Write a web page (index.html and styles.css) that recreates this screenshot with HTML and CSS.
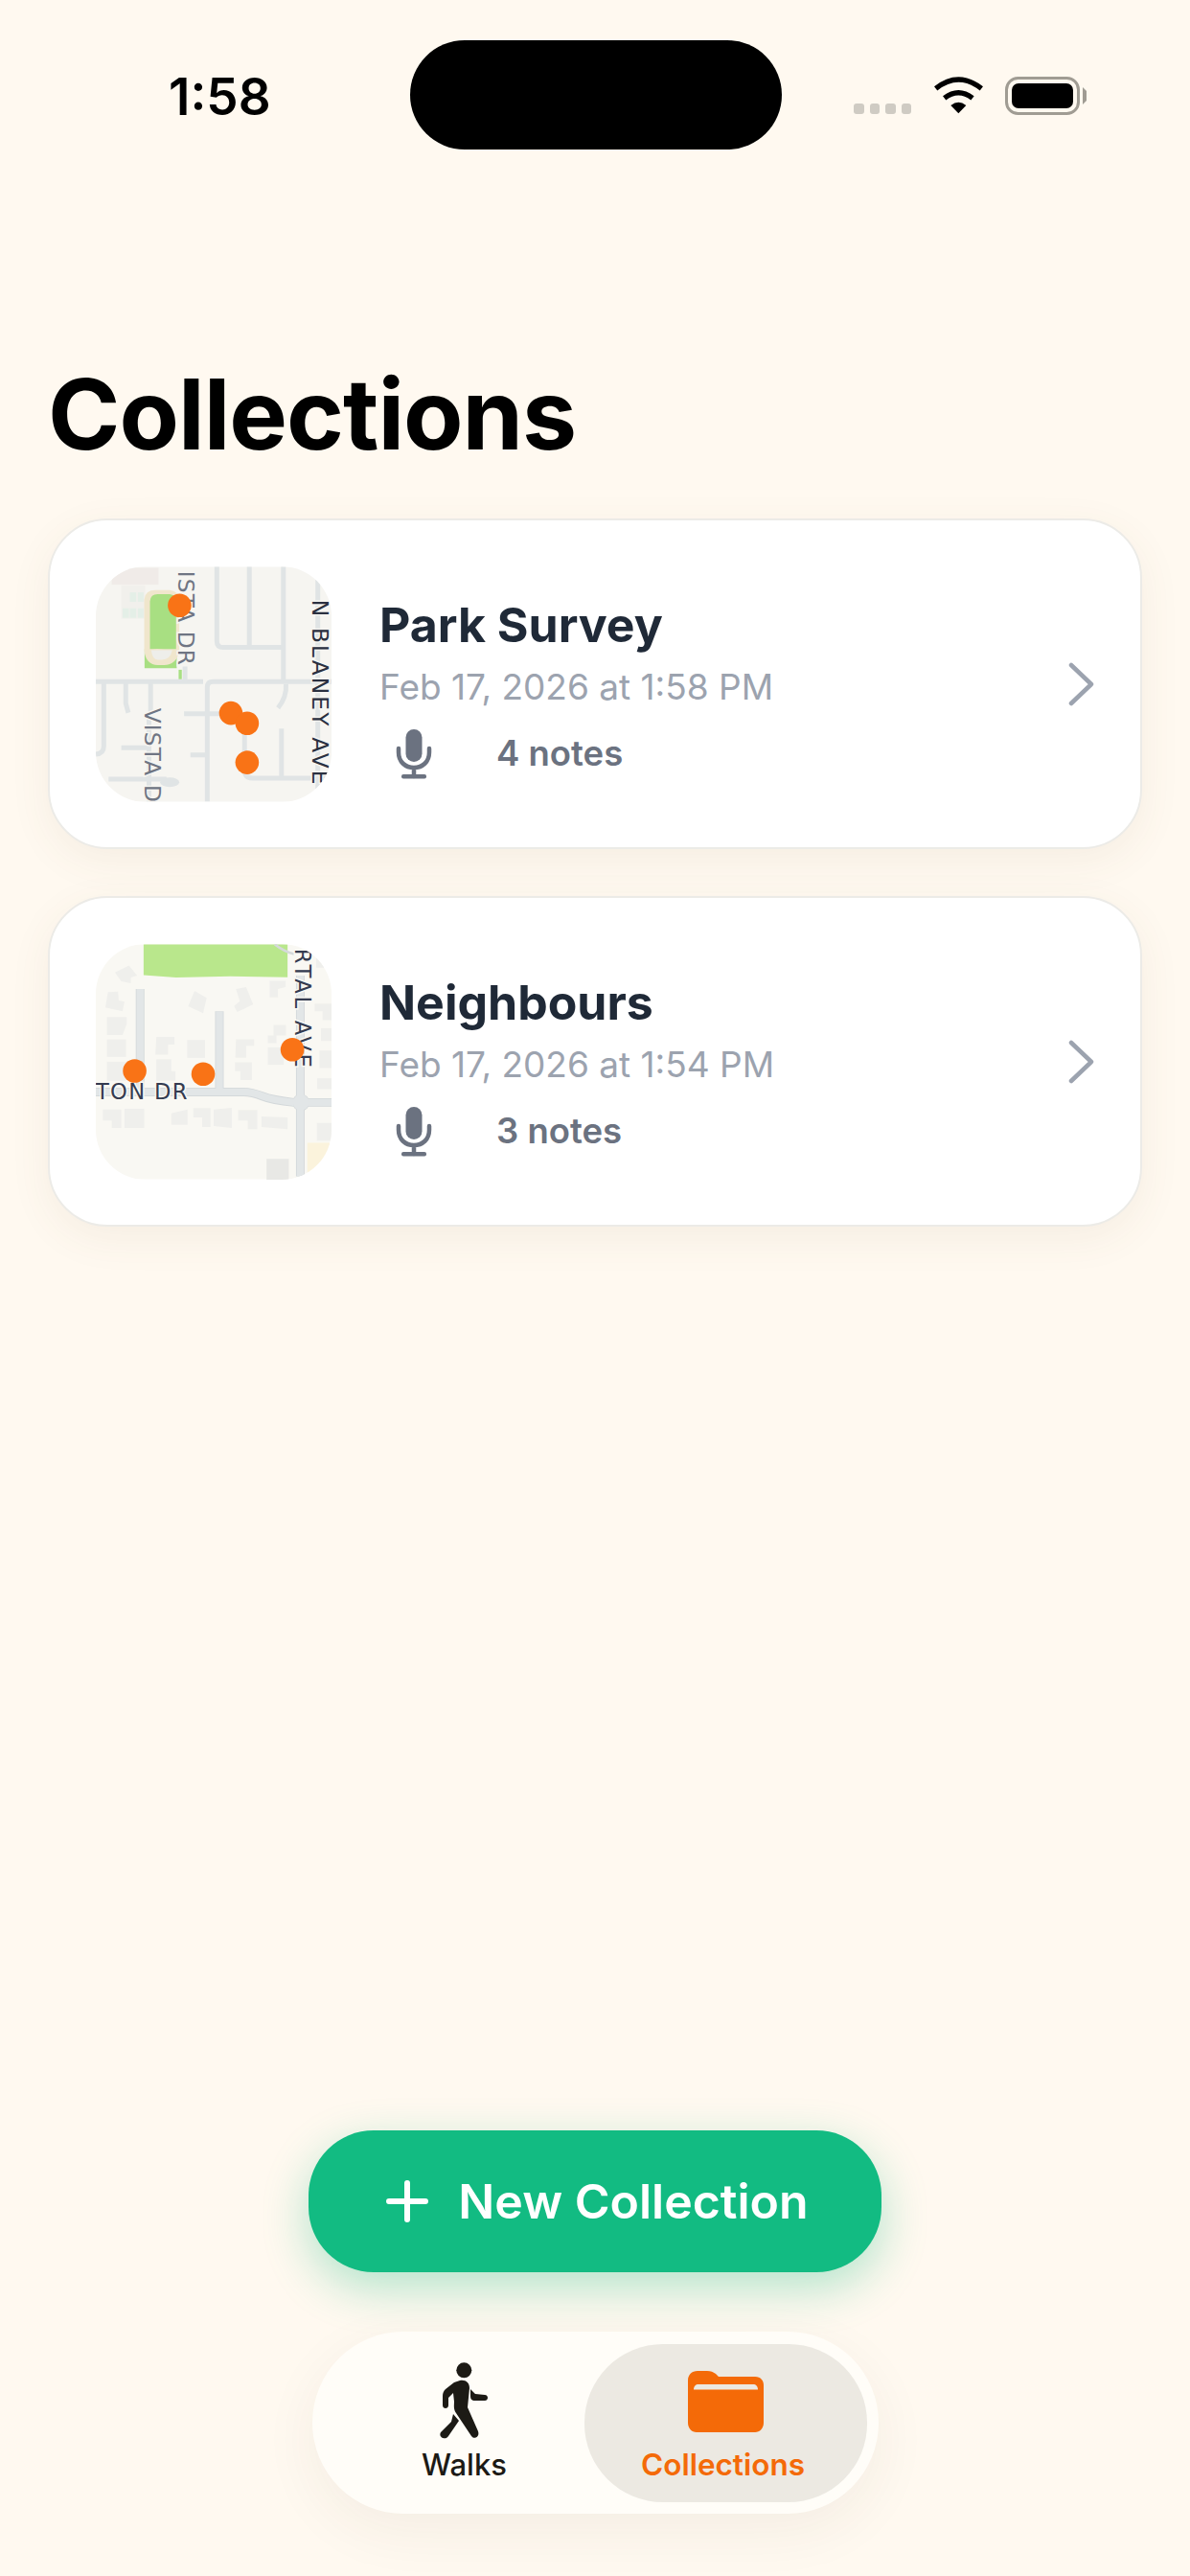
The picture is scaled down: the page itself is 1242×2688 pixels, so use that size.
FILE: index.html
```html
<!DOCTYPE html>
<html lang="en">
<head>
<meta charset="utf-8">
<title>Collections</title>
<link rel="stylesheet" href="styles.css">
</head>
<body>
<main class="screen">
  <header class="status">
    <div class="status-left"><span class="time">1:58</span></div>
    <div class="island"></div>
    <div class="status-right">
      <div class="signal"><i></i><i></i><i></i><i></i></div>
      <svg class="wifi" viewBox="280 33 160 117"><path class="wifi-arc" d="M287 70 Q358 14 430 70"/><path class="wifi-arc" d="M314 100 Q358 66 402 100"/><path class="wifi-wedge" d="M358 148 L334 123 Q358 104 382 123 Z"/></svg>
      <svg class="battery" viewBox="0 0 86 40"><rect class="batt-shell" x="1.5" y="1.5" width="75" height="37" rx="12"/><rect class="batt-fill" x="7" y="7" width="64" height="26" rx="7"/><path class="batt-nub" d="M81 11 L85 15 V25 L81 29 Z"/></svg>
    </div>
  </header>

  <h1 class="title">Collections</h1>

  <section class="list">
    <article class="card">
      <div class="thumb">
        <svg class="map" viewBox="178 182 740 737">
          <rect class="m-bg" x="178" y="182" width="740" height="737"/>
          <rect class="m-pink" x="228" y="185" width="147" height="53"/>
          <rect class="m-block" x="258" y="240" width="75" height="105"/>
          <g class="m-mint">
            <rect x="285" y="262" width="20" height="30"/>
            <rect x="310" y="262" width="18" height="30"/>
            <rect x="262" y="312" width="20" height="30"/>
            <rect x="285" y="312" width="20" height="30"/>
            <rect x="310" y="312" width="18" height="30"/>
          </g>
          <path class="m-park" d="M331 500 V440 H432 V500 Z"/>
          <path class="m-tan" d="M330 445 V285 Q332 255 366 255 H410 Q438 258 440 285 V445 Q432 490 392 490 H372 Q336 490 330 445 Z"/>
          <path class="m-park" d="M348 440 V290 Q350 268 372 268 H410 Q428 270 430 290 V440 H395 Q370 438 348 440 Z"/>
          <path class="m-pale" d="M352 444 H418 Q412 474 385 474 H372 Q356 474 352 444 Z"/>
          <rect class="m-park" x="438" y="505" width="10" height="30"/>
          <path class="m-road" d="M558 182 V415 Q558 435 578 435 H768"/>
          <path class="m-road" d="M660 182 V435"/>
          <path class="m-road" d="M767 182 V542"/>
          <path class="m-road" d="M178 542 H515"/>
          <path class="m-road" d="M528 918 V560 Q528 542 546 542 H918"/>
          <path class="m-road" d="M458 495 V542"/>
          <path class="m-road" d="M203 542 V745 Q203 768 178 770"/>
          <path class="m-road" d="M272 542 V610 L280 640"/>
          <path class="m-road" d="M350 542 V640"/>
          <path class="m-road" d="M775 550 Q778 590 750 625"/>
          <path class="m-road" d="M455 643 H600"/>
          <path class="m-road" d="M645 660 V820 Q645 845 670 845 H918"/>
          <path class="m-road" d="M761 690 V845"/>
          <path class="m-road" d="M258 750 H345"/>
          <path class="m-road" d="M475 772 H528"/>
          <path class="m-road" d="M218 848 H400"/>
          <ellipse class="m-roadfill" cx="410" cy="858" rx="30" ry="15"/>
          <path class="m-road" d="M875 215 V918"/>
          <path class="m-road" d="M345 640 V918"/>
          <text class="m-label m-grey" x="437" y="195" transform="rotate(90 437 195)" textLength="295">ISTA DR</text>
          <text class="m-label m-grey" x="331" y="625" transform="rotate(90 331 625)" textLength="295">VISTA D</text>
          <text class="m-label m-dark" x="857" y="285" transform="rotate(90 857 285)" textLength="580">N BLANEY AVE</text>
          <circle class="m-dot" cx="441" cy="303" r="37"/>
          <circle class="m-dot" cx="602" cy="641" r="37"/>
          <circle class="m-dot" cx="653" cy="673" r="37"/>
          <circle class="m-dot" cx="653" cy="796" r="37"/>
        </svg>
      </div>
      <div class="info">
        <h2 class="name">Park Survey</h2>
        <p class="date">Feb 17, 2026 at 1:58 PM</p>
        <div class="count">
          <svg class="mic" viewBox="10 5 44 58"><rect class="mic-head" x="23.5" y="9" width="17" height="34" rx="8.5"/><path class="mic-arm" d="M16 29 V33 C16 43 23 49 32 49 C41 49 48 43 48 33 V29 M32 49 V58"/><rect class="mic-head" x="19" y="56" width="26" height="4.5" rx="2"/></svg>
          <span>4 notes</span>
        </div>
      </div>
      <svg class="chev" viewBox="0 0 28 46"><path d="M3 3 L24 23 L3 43"/></svg>
    </article>

    <article class="card">
      <div class="thumb">
        <svg class="map" viewBox="178 192 740 737">
          <rect class="m-bg2" x="178" y="192" width="740" height="737"/>
          <path class="m-park2" d="M328 192 H780 V295 L600 292 L430 296 L328 288 Z"/>
          <path class="m-thin" d="M740 192 Q770 215 800 222"/>
          <path class="m-yellow" d="M842 815 H918 V929 H842 Z"/>
          <g class="m-bld">
            <path d="M238 280 L282 258 L308 290 L288 296 L288 314 L258 308 Z"/>
            <path d="M216 342 L248 340 L250 368 L268 372 L262 402 L208 390 Z"/>
            <path d="M213 420 H275 V442 L262 476 H213 Z"/>
            <rect x="213" y="490" width="60" height="55"/>
            <rect x="213" y="560" width="60" height="60"/>
            <path d="M368 482 H425 V506 H405 V538 H365 Z"/>
            <path d="M368 552 H415 V590 H428 V620 H368 Z"/>
            <rect x="465" y="492" width="56" height="56"/>
            <path d="M618 490 H675 V510 H650 V548 H616 Z"/>
            <path d="M615 562 H668 V618 H632 V590 H615 Z"/>
            <path d="M488 338 L526 360 L515 408 L468 386 Z"/>
            <path d="M618 332 L650 326 L672 380 L622 404 L612 385 L630 370 Z"/>
            <path d="M724 306 H774 V326 L750 332 V358 H724 Z"/>
            <path d="M736 445 H775 V478 H745 V502 H718 V478 H736 Z"/>
            <rect x="718" y="515" width="50" height="55"/>
            <path d="M865 378 H918 V430 H890 V402 H865 Z"/>
            <rect x="885" y="455" width="33" height="40"/>
            <rect x="880" y="525" width="38" height="55"/>
            <rect x="873" y="612" width="45" height="34"/>
            <path d="M870 235 H905 V265 H870 Z"/>
            <path d="M200 710 H258 V768 H228 V745 H200 Z"/>
            <rect x="268" y="708" width="62" height="60"/>
            <path d="M415 722 L466 710 V758 H415 Z"/>
            <path d="M484 706 H538 V765 H512 V735 H484 Z"/>
            <path d="M548 710 L605 705 V768 L548 762 Z"/>
            <path d="M625 712 H685 V772 H655 V745 H625 Z"/>
            <path d="M698 732 L780 735 V772 L698 765 Z"/>
            <path d="M872 752 H918 V808 H872 Z"/>
            <rect class="m-bld-dark" x="714" y="865" width="70" height="66"/>
          </g>
          <path class="m-wide-o" d="M317 332 V655"/>
          <path class="m-wide-o" d="M566 402 V650"/>
          <path class="m-wide-o" d="M178 655 H640 Q668 655 700 668 T800 688"/>
          <path class="m-wide-o" d="M820 290 V920"/>
          <path class="m-wide-o" d="M822 688 H918"/>
          <circle class="m-rb-o" cx="822" cy="688" r="27"/>
          <path class="m-wide" d="M317 332 V655"/>
          <path class="m-wide" d="M566 402 V650"/>
          <path class="m-wide" d="M178 655 H640 Q668 655 700 668 T800 688"/>
          <path class="m-wide" d="M820 290 V920"/>
          <path class="m-wide" d="M822 688 H918"/>
          <circle class="m-rb" cx="822" cy="688" r="25"/>
          <text class="m-label2 m-dark2" x="178" y="677" textLength="287">TON DR</text>
          <text class="m-label2 m-dark2" x="805" y="205" transform="rotate(90 805 205)" textLength="373">RTAL AVE</text>
          <circle class="m-dot" cx="300" cy="589" r="37"/>
          <circle class="m-dot" cx="515" cy="599" r="37"/>
          <circle class="m-dot" cx="795" cy="522" r="37"/>
        </svg>
      </div>
      <div class="info">
        <h2 class="name">Neighbours</h2>
        <p class="date">Feb 17, 2026 at 1:54 PM</p>
        <div class="count">
          <svg class="mic" viewBox="10 5 44 58"><rect class="mic-head" x="23.5" y="9" width="17" height="34" rx="8.5"/><path class="mic-arm" d="M16 29 V33 C16 43 23 49 32 49 C41 49 48 43 48 33 V29 M32 49 V58"/><rect class="mic-head" x="19" y="56" width="26" height="4.5" rx="2"/></svg>
          <span>3 notes</span>
        </div>
      </div>
      <svg class="chev" viewBox="0 0 28 46"><path d="M3 3 L24 23 L3 43"/></svg>
    </article>
  </section>

  <div class="spacer"></div>

  <button class="cta">
    <svg class="plus" viewBox="0 0 44 44"><path d="M22 3 V41 M3 22 H41"/></svg>
    <span>New Collection</span>
  </button>

  <nav class="tabs">
    <a class="tab">
      <svg class="tab-icon" viewBox="0 0 110 110"><circle class="walker" cx="54.3" cy="23.3" r="8"/><path class="walker" d="M50 34 C56 33 60 36 60 42 L58 62 L69 87 C71 93 65 96 62 92 L46 68 C43 64 44 60 44 56 L43 47 L38 52 L38 60 C38 64 32 64 32 60 L32 50 C32 47 33 45 35 43 L44 36 Z"/><path class="walker" d="M43 69 L49 76 L38 92 C35 97 27 93 30 88 L41 77 Z"/><path class="walker" d="M61 43 L66 48 L76 49 C80 49 80 55 76 55 L66 55 C62 55 61 53 61 50 Z"/></svg>
      <span>Walks</span>
    </a>
    <a class="tab tab-active">
      <svg class="tab-icon" viewBox="0 0 110 110"><path class="folder" d="M26 14 H36 C40 14 42 15 45 17 L48 20 H86 C92 20 95 24 95 29 V68 C95 74 91 78 86 78 H25 C20 78 16 74 16 68 V24 C16 18 20 14 26 14 Z"/><path class="folder-slot" d="M22 33.5 C22 30 24 28 27 28 H84 C87 28 89 30 89 33.5 Z"/></svg>
      <span>Collections</span>
    </a>
  </nav>
</main>
</body>
</html>
```
FILE: styles.css
```css
* { box-sizing: border-box; }
html, body { margin: 0; padding: 0; }
body { background: #fff9f0; font-family: Inter, "Liberation Sans", sans-serif; }

.screen {
  width: 1242px;
  height: 2688px;
  display: flex;
  flex-direction: column;
  overflow: hidden;
  background: #fff9f0;
}

/* status bar */
.status {
  display: grid;
  grid-template-columns: 428px 388px 426px;
  height: 114px;
  margin-top: 42px;
  align-items: center;
}
.status-left { padding-left: 176px; padding-top: 3px; }
.time { font-size: 53px; font-weight: 600; color: #000; }
.island { height: 114px; border-radius: 57px; background: #000; }
.status-right { display: flex; align-items: flex-start; height: 114px; padding-top: 38px; }
.signal { display: flex; gap: 6px; margin: 28px 0 0 75px; }
.signal i { width: 10.5px; height: 11px; border-radius: 3px; background: #cfcbc3; }
.wifi { width: 54px; height: 39px; margin-left: 23px; }
.wifi-arc { fill: none; stroke: #000; stroke-width: 16; }
.wifi-wedge { fill: #000; }
.battery { width: 86px; height: 40px; margin-left: 21px; }
.batt-shell { fill: none; stroke: #a09c93; stroke-width: 3; }
.batt-fill { fill: #000; }
.batt-nub { fill: #a09c93; }

/* title */
.title {
  margin: 214px 0 0 50px;
  height: 171px;
  font-size: 102px;
  line-height: 124px;
  font-weight: 700;
  color: #000;
  letter-spacing: -1px;
}

/* cards */
.list { display: flex; flex-direction: column; gap: 49px; padding: 0 50px; }
.card {
  display: flex;
  align-items: center;
  height: 345px;
  padding: 0 47px 0 48px;
  background: #fff;
  border: 2px solid #ecebe7;
  border-radius: 62px;
  box-shadow: 0 12px 44px rgba(120, 90, 50, 0.07);
}
.thumb { flex: none; width: 246px; height: 246px; border-radius: 52px; overflow: hidden; }
.map { display: block; width: 100%; height: 100%; }

.info { flex: 1; align-self: flex-start; padding: 79px 0 0 50px; }
.name { margin: 0; font-size: 50px; line-height: 60px; font-weight: 700; color: #1f2937; }
.date { margin: 10px 0 0; font-size: 37px; line-height: 50px; font-weight: 400; color: #9ca3af; }
.count { display: flex; align-items: center; gap: 67px; margin: 14px 0 0 14px; font-size: 36.5px; line-height: 60px; font-weight: 600; color: #6b7280; }
.mic { width: 44px; height: 58px; flex: none; margin-right: -3px; }
.mic-head { fill: #6b7280; }
.mic-arm { fill: none; stroke: #6b7280; stroke-width: 4.5; stroke-linecap: round; }
.chev { flex: none; width: 28px; height: 46px; }
.chev path { fill: none; stroke: #9ca3af; stroke-width: 4.5; stroke-linecap: round; stroke-linejoin: round; }

/* map 1 */
.m-bg { fill: #f6f5f1; }
.m-pink { fill: #f0ebe8; }
.m-block { fill: #f1f0ec; }
.m-mint { fill: #e4efe7; }
.m-park { fill: #a8df82; }
.m-tan { fill: #f0e6cc; }
.m-pale { fill: #eeeeea; }
.m-road { fill: none; stroke: #e0e4e5; stroke-width: 15; stroke-linejoin: round; }
.m-roadfill { fill: #e0e4e5; }
.m-label { font-family: "DejaVu Sans", sans-serif; font-size: 70px; font-weight: 400; paint-order: stroke; stroke: #f6f5f1; stroke-width: 9px; }
.m-grey { fill: #6f7583; }
.m-dark { fill: #2a3040; }
.m-dot { fill: #f97316; }

/* map 2 */
.m-bg2 { fill: #f9f8f3; }
.m-park2 { fill: #b9e78c; }
.m-thin { fill: none; stroke: #d5d9da; stroke-width: 8; }
.m-yellow { fill: #fbf3dc; }
.m-bld { fill: #efefec; }
.m-bld-dark { fill: #e8e8e5; }
.m-wide-o { fill: none; stroke: #d3d8da; stroke-width: 27; }
.m-wide { fill: none; stroke: #e2e6e7; stroke-width: 22; }
.m-rb-o { fill: #d3d8da; }
.m-rb { fill: #e2e6e7; }
.m-label2 { font-family: "DejaVu Sans", sans-serif; font-size: 68px; font-weight: 400; paint-order: stroke; stroke: #f9f8f3; stroke-width: 9px; }
.m-dark2 { fill: #343b50; }

/* bottom */
.spacer { flex: 1; }
.cta {
  align-self: center;
  display: flex;
  align-items: center;
  justify-content: center;
  gap: 31px;
  width: 598px;
  height: 148px;
  margin: 0 0 62px;
  padding: 0 0 0 5px;
  border: 0;
  border-radius: 68px;
  background: #12bb82;
  color: #fff;
  font-family: Inter, sans-serif;
  font-size: 50px;
  font-weight: 600;
  box-shadow: 0 16px 48px rgba(16, 185, 129, 0.32);
}
.plus { width: 44px; height: 44px; }
.plus path { fill: none; stroke: #fff; stroke-width: 6; stroke-linecap: round; }

.tabs {
  align-self: center;
  display: flex;
  justify-content: space-between;
  width: 591px;
  height: 190px;
  margin-bottom: 65px;
  padding: 13px 12px 12px 34px;
  border-radius: 95px;
  background: #fffdf8;
  box-shadow: 0 18px 60px rgba(60, 50, 30, 0.06);
}
.tab {
  flex: none;
  width: 250px;
  display: flex;
  flex-direction: column;
  align-items: center;
  font-size: 31px;
  line-height: 36px;
  font-weight: 500;
  color: #1c1a15;
}
.tab-active {
  width: 295px;
  border-radius: 82px;
  background: #ece9e2;
  color: #f46a08;
  font-size: 31.5px;
  font-weight: 600;
}
.tab-icon { width: 110px; height: 110px; margin: 4px 0 1px; }
.tab span { margin-top: -7px; }
.tab-active .tab-icon { margin-top: 14px; }
.tab-active span { margin: -17px 5px 0 0; }
.walker { fill: #1c1a15; }
.folder { fill: #f46a08; }
.folder-slot { fill: #ece9e2; }
```
